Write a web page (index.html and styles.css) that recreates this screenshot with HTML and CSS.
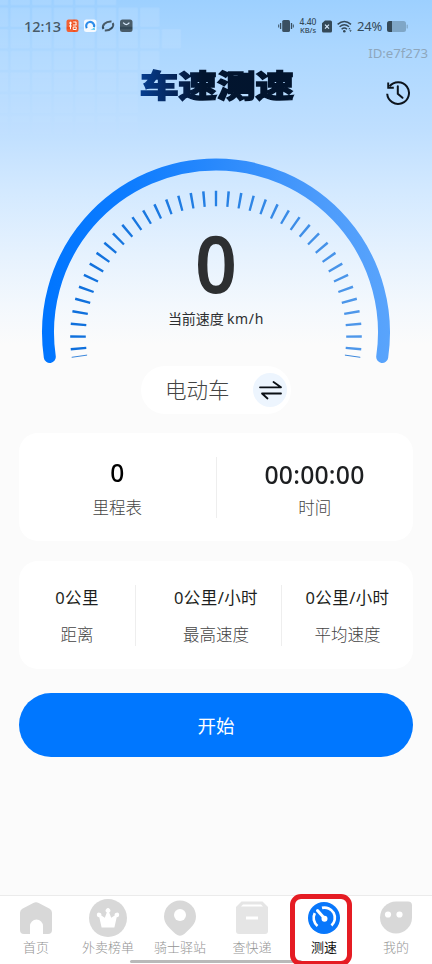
FILE: index.html
```html
<!DOCTYPE html>
<html lang="zh-CN">
<head>
<meta charset="utf-8">
<title>车速测速</title>
<link rel="stylesheet" href="styles.css">
</head>
<body>
<div class="app">
  <svg class="tiles" width="216" height="150" viewBox="0 0 216 150">
    <defs>
      <pattern id="cells" x="9.4" y="6.4" width="21.6" height="21.6" patternUnits="userSpaceOnUse"><rect x="1.2" y="1.2" width="19.2" height="19.2" rx="1" fill="#fff"/></pattern>
      <linearGradient id="fade" x1="0" y1="0" x2="0" y2="1"><stop offset="0" stop-color="#fff" stop-opacity=".12"/><stop offset=".5" stop-color="#fff" stop-opacity=".08"/><stop offset="1" stop-color="#fff" stop-opacity="0"/></linearGradient>
      <mask id="fadeMask"><rect width="216" height="150" fill="url(#fade)"/></mask>
    </defs>
    <g mask="url(#fadeMask)"><path d="M0 0H117.500V6.400H160V28H182V50H160V71H139V150H0z" fill="url(#cells)"/></g>
  </svg>

  <header class="status">
    <span class="clock">12:13</span>
    <svg class="status-left" width="68" height="14" viewBox="0 0 68 14">
      <rect x=".5" y=".5" width="12" height="12.5" rx="2" fill="#f04f1d"/>
      <path d="M3 4h3M4.5 2.7v7.5M3 7h2.8M7.2 3h3M10 3v3M7 6h3.5M7.200 8h3v2.500h-3z" fill="none" stroke="#fff" stroke-width="1"/>
      <rect x="18" y=".5" width="12.5" height="12.5" rx="2.5" fill="#f5faff"/>
      <path d="M20.8 9.2A4 4 0 1 1 28 8" fill="none" stroke="#1680e8" stroke-width="2.2"/>
      <path d="M24 10.500q2.600.3 4.500-2.400l.5 3z" fill="#4dc5ee"/>
      <path d="M37.400 10C35.500 6.500 39.500 2.200 45.500 2.600" fill="none" stroke="#344958" stroke-width="2"/>
      <path d="M46.800 4C48.500 7.500 44.500 11.800 38.800 11.400" fill="none" stroke="#344958" stroke-width="2"/>
      <rect x="54" y=".5" width="12.5" height="12.5" rx="2.5" fill="#344958"/>
      <path d="M57.200 3.700q3.100 3.700 6.200 0" fill="none" stroke="#d5e9fb" stroke-width="1.3"/>
    </svg>
    <span class="grow"></span>
    <svg class="vibrate" width="16" height="14" viewBox="0 0 16 14"><rect x="4.2" y="1" width="7.8" height="12" rx="1.6" fill="#3a5062"/><path d="M2.600 4v6M13.500 4v6" stroke="#3a5062" stroke-width="1.3"/><path d="M.7 5.500v3M15.300 5.500v3" stroke="#3a5062" stroke-width="1"/></svg>
    <div class="rate"><span>4.40</span><span>KB/s</span></div>
    <svg class="sim" width="10" height="13" viewBox="0 0 10 13"><path d="M0 3.200L3 .5h5.500Q10 .5 10 2v9q0 1.500-1.500 1.500h-7Q0 12.500 0 11z" fill="#344958"/><path d="M3 4.600l4 4M7 4.600l-4 4" stroke="#d5e9fb" stroke-width="1.2"/></svg>
    <svg class="wifi" width="16" height="13" viewBox="0 0 16 13"><g fill="none" stroke="#344958" stroke-width="1.500"><path d="M.6 4.300q6.700-5.600 13.400 0M2.600 6.800q4.700-4 9.400 0M4.600 9.200q2.700-2.300 5.400 0"/></g><circle cx="7.300" cy="11.200" r="1.300" fill="#344958"/><path d="M11.300 9.300h2.400L12.500 7.700zM12.300 10.300h2.400l-1.200 1.700z" fill="#344958"/></svg>
    <span class="percent">24%</span>
    <svg class="battery" width="21" height="11" viewBox="0 0 21 11"><rect x="0" y="0" width="19" height="11" rx="2.500" fill="#7fa6c6"/><path d="M2.500 0H5v11H2.500Q0 11 0 8.500v-6Q0 0 2.500 0z" fill="#344958"/><rect x="19.600" y="3.500" width="1.200" height="4" rx=".6" fill="#7fa6c6"/></svg>
  </header>
  <div class="device-id">ID:e7f273</div>

  <div class="titlebar">
    <h1>车速测速</h1>
    <svg class="history" width="26" height="26" viewBox="0 0 26 26" fill="none" stroke="#0d141c" stroke-width="2"><path d="M4.500 6.300A10.900 10.900 0 1 1 2.200 13.800"/><path d="M3.200 2.500v5.300h5.600" stroke-width="1.900"/><path d="M12.800 6.200v7.600l4.700 4" stroke-linecap="round"/></svg>
  </div>

  <section class="gauge">
    <svg class="dial" width="356" height="212" viewBox="38 154 356 212" fill="none">
      <defs>
        <linearGradient id="arc" gradientUnits="userSpaceOnUse" x1="42" y1="0" x2="390" y2="0"><stop offset="0" stop-color="#0075ff"/><stop offset=".25" stop-color="#0d7cff"/><stop offset=".5" stop-color="#2989fc"/><stop offset=".8" stop-color="#4c9bfb"/><stop offset="1" stop-color="#59a4fc"/></linearGradient>
        <linearGradient id="tick" gradientUnits="userSpaceOnUse" x1="70" y1="0" x2="362" y2="0"><stop offset="0" stop-color="#0e6fdc"/><stop offset=".5" stop-color="#2580e4"/><stop offset="1" stop-color="#5098ea"/></linearGradient>
      </defs>
      <path d="M49.800 357A168 168 0 1 1 382.200 357" stroke="url(#arc)" stroke-width="12" stroke-linecap="round"/>
      <path d="M78.630 349.730A138 138 0 1 1 353.370 349.730" pathLength="191" stroke-dasharray="1 4" stroke="url(#tick)" stroke-width="15.600"/>
      <path d="M71.700 357.300l15.400-2.200M360.300 357.300l-15.400-2.200" stroke="#3b87dc" stroke-width="1"/>
    </svg>
    <div class="readout">
      <div class="speed">0</div>
      <div class="unit">当前速度<span>km/h</span></div>
    </div>
  </section>

  <div class="vehicle">
    <span>电动车</span>
    <i class="swap"><svg width="24" height="20" viewBox="0 0 24 20" fill="none" stroke="#0a0f14" stroke-width="1.800" stroke-linecap="round" stroke-linejoin="round"><path d="M2 7.300h21L15.500 2M23 13.500H4l5.500 5"/></svg></i>
  </div>

  <section class="card two">
    <div class="cell"><b class="black">0</b><small>里程表</small></div>
    <hr>
    <div class="cell"><b class="timer">00:00:00</b><small>时间</small></div>
  </section>

  <section class="card three">
    <div class="cell"><b>0公里</b><small>距离</small></div>
    <hr>
    <div class="cell mid"><b>0公里/小时</b><small>最高速度</small></div>
    <hr>
    <div class="cell"><b>0公里/小时</b><small>平均速度</small></div>
  </section>

  <button class="start">开始</button>

  <nav class="tabs">
    <div class="tab"><svg width="38" height="38" viewBox="0 0 38 38"><path d="M16.300 3.900q2.700-1.500 5.400 0l11 5.900q2.300 1.300 2.300 4V31q0 4-4 4h-5V27a6.500 6.500 0 0 0-13 0v8H7q-4 0-4-4V13.800q0-2.700 2.300-4z" fill="#d8d8d8"/></svg><span>首页</span></div>
    <div class="tab"><svg width="38" height="38" viewBox="0 0 38 38"><circle cx="19" cy="19" r="19" fill="#d8d8d8"/><path d="M12.600 28.500L10.300 18.200a2.300 2.300 0 1 1 2-1.700l3.500 2.200 2-5.200a2.300 2.300 0 1 1 2.400 0l2 5.200 3.500-2.200a2.300 2.300 0 1 1 2 1.700l-2.300 10.300z" fill="#fff"/></svg><span>外卖榜单</span></div>
    <div class="tab"><svg width="38" height="38" viewBox="0 0 38 38"><path d="M19 1.500A16 16 0 0 1 35 17.500C35 25 29 29.500 23.300 35Q19 38.500 14.700 35C9 29.500 3 25 3 17.500A16 16 0 0 1 19 1.500z" fill="#d8d8d8"/><circle cx="19" cy="16" r="6" fill="#fff"/></svg><span>骑士驿站</span></div>
    <div class="tab"><svg width="38" height="38" viewBox="0 0 38 38"><path d="M8.500 2.500h21L35 8v24q0 3-3 3H6q-3 0-3-3V8z" fill="#e5e5e5"/><path d="M10 5.500h18l2 2H8z" fill="#fff"/><path d="M13 19h12" stroke="#fff" stroke-width="3"/></svg><span>查快递</span></div>
    <div class="tab active"><svg width="38" height="38" viewBox="0 0 38 38"><circle cx="19" cy="19" r="16" fill="#0877fb"/><g fill="none" stroke="#fff"><path d="M9.800 14.200A10.300 10.300 0 0 0 12.500 27M17 8.900A10.300 10.300 0 0 1 26.500 26.500" stroke-width="2.700"/><path d="M12.500 11.500L20 20" stroke-width="3" stroke-linecap="round"/></g><circle cx="19.500" cy="19.800" r="3" fill="#fff"/></svg><span>测速</span></div>
    <div class="tab"><svg width="38" height="38" viewBox="0 0 38 38"><path d="M19 2.500h12q4 0 4 4v12a16 16 0 1 1-16-16z" fill="#d8d8d8"/><circle cx="11" cy="15.500" r="3.100" fill="#fff"/><circle cx="22.500" cy="15.500" r="3.100" fill="#fff"/></svg><span>我的</span></div>
    <div class="home-bar"></div>
    <div class="highlight"></div>
  </nav>
</div>
</body>
</html>
```
FILE: styles.css
```css
* { box-sizing: border-box; }
body { margin: 0; }
.app {
  position: relative;
  width: 432px;
  height: 964px;
  overflow: hidden;
  display: flex;
  flex-direction: column;
  align-items: center;
  font-family: "Noto Sans", "Noto Sans CJK SC", sans-serif;
  color: #1d1f21;
  background: linear-gradient(#9dd0ff 0, #acd7ff 50px, #bfdfff 130px, #d3e9ff 190px, #e6f2fe 255px, #f3f8fd 305px, #fbfbfb 345px) #fbfbfb;
}
.tiles { position: absolute; left: 0; top: 0; }
.status {
  width: 100%;
  height: 44px;
  padding: 8px 24px 0;
  display: flex;
  align-items: center;
  color: #344958;
}
.clock { width: 42px; font-size: 14.5px; font-weight: 500; margin-top: -1px; }
.status-left { display: block; }
.grow { flex: 1; }
.rate {
  display: flex;
  flex-direction: column;
  align-items: center;
  width: 20px;
  margin: 0 4px;
  font-size: 8.5px;
  line-height: 8px;
  font-weight: 500;
}
.rate span:last-child { font-size: 7.5px; }
.wifi { margin: 0 4px 0 5px; }
.percent { width: 30px; font-size: 13px; letter-spacing: -.2px; white-space: nowrap; }
.device-id {
  align-self: flex-end;
  height: 18px;
  padding-right: 4px;
  font-size: 13.2px;
  line-height: 18px;
  color: #8ea7bd;
}
.titlebar {
  width: 100%;
  height: 92px;
  display: grid;
  grid-template-columns: 1fr 160px 1fr;
  padding: 3px 21px 0;
  align-items: start;
}
h1 {
  grid-column: 2;
  margin: -3px 0 0 2px;
  font: 900 33.5px/43px "Noto Sans CJK SC", sans-serif;
  text-align: center;
  white-space: nowrap;
  transform: scale(1.15, .91);
  background: linear-gradient(90deg, #063c8d 14px, #05265c 40px, #02152f 66px, #02142d);
  -webkit-background-clip: text;
  background-clip: text;
  color: transparent;
  -webkit-text-stroke: 1.5px transparent;
}
.history { justify-self: end; margin-top: 15px; }
.gauge {
  display: grid;
  justify-items: center;
  height: 212px;
}
.dial, .readout { grid-area: 1 / 1; }
.dial { display: block; }
.readout { text-align: center; padding-top: 68px; }
.speed { height: 86px; font-size: 79px; line-height: 82px; font-weight: 600; color: #2d2f31; transform: scaleX(.93); }
.unit { font-size: 14px; line-height: 22px; color: #2c2e30; display: flex; justify-content: center; gap: 3px; }
.unit span { letter-spacing: .7px; }
.vehicle {
  width: 150px;
  height: 48px;
  padding: 0 4px 0 24px;
  border-radius: 24px;
  background: #fff;
  display: flex;
  flex-shrink: 0;
  align-items: center;
  justify-content: space-between;
  font-size: 21.5px;
  font-weight: 300;
  color: #444;
}
.vehicle span { margin-top: -4px; }
.swap {
  width: 34px;
  height: 34px;
  border-radius: 50%;
  background: #edf5fe;
  display: grid;
  place-items: center;
}
.card {
  width: 394px;
  height: 108px;
  margin-top: 19px;
  flex-shrink: 0;
  border-radius: 19px;
  background: #fff;
  display: grid;
  align-items: center;
}
.two { grid-template-columns: 1fr 1px 1fr; }
.three { grid-template-columns: 116px 1px 145px 1px 131px; margin-top: 20px; }
.card hr { margin: 0; border: 0; width: 1px; height: 61px; background: #eee; }
.cell { display: flex; flex-direction: column; align-items: center; white-space: nowrap; }
.cell b { font-weight: 400; }
.cell small { font-size: 16.5px; line-height: 24px; font-weight: 300; color: #444; }
.two .cell { padding-top: 4px; }
.two b { font-size: 25px; height: 37px; line-height: 31px; }
.two .timer { letter-spacing: .2px; font-weight: 500; transform: scaleX(.99); }
.two .black { color: #000; line-height: 27px; font-weight: 500; transform: scaleX(.98); }
.three .cell { gap: 12px; padding-top: 1px; }
.three .mid { padding-left: 15px; }
.three b { font-size: 16.5px; line-height: 26px; letter-spacing: .4px; }
.start {
  width: 394px;
  height: 64px;
  margin: 24px 0 0;
  padding: 0;
  border: 0;
  flex-shrink: 0;
  border-radius: 32px;
  background: #0077ff;
  color: #fff;
  font: 400 18.5px/64px "Noto Sans CJK SC", sans-serif;
}
.tabs {
  position: relative;
  width: 432px;
  height: 69px;
  margin-top: auto;
  padding-top: 3px;
  flex-shrink: 0;
  border-top: 1px solid #ebebeb;
  background: #fff;
  display: grid;
  grid-template-columns: repeat(6, 72px);
}
.tab {
  display: flex;
  flex-direction: column;
  align-items: center;
  font: 300 13px/20px "Noto Sans CJK SC", sans-serif;
  color: #949494;
}
.tab svg { display: block; flex-shrink: 0; }
.active { color: #111; font-weight: 400; }
.home-bar { position: absolute; left: 130px; bottom: 1px; width: 172px; height: 3px; border-radius: 2px; background: #b9b9b9; }
.highlight { position: absolute; left: 290px; top: -2px; width: 62px; height: 72px; border: 5px solid #e51c23; border-radius: 11px; }
```
